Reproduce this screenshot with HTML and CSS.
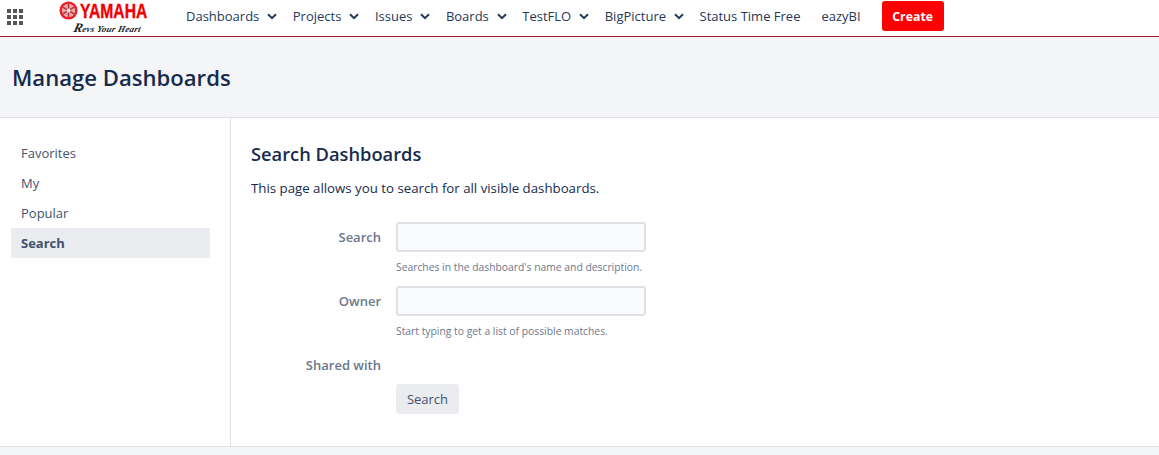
FILE: index.html
```html
<!DOCTYPE html>
<html lang="en">
<head>
<meta charset="utf-8">
<title>Manage Dashboards</title>
<link rel="stylesheet" href="styles.css">
</head>
<body>
<header class="topbar">
  <button class="apps" aria-label="Apps">
    <svg width="16" height="16" viewBox="0 0 16 16"><g fill="#555"><rect x="0" y="0" width="4" height="4"/><rect x="6" y="0" width="4" height="4"/><rect x="12" y="0" width="4" height="4"/><rect x="0" y="6" width="4" height="4"/><rect x="6" y="6" width="4" height="4"/><rect x="12" y="6" width="4" height="4"/><rect x="0" y="12" width="4" height="4"/><rect x="6" y="12" width="4" height="4"/><rect x="12" y="12" width="4" height="4"/></g></svg>
  </button>
  <div class="logo">
    <div class="logo-top">
      <svg class="emblem" width="19" height="19" viewBox="0 0 20 20"><circle cx="10" cy="10" r="9.500" fill="#ee1c25"/><circle cx="10" cy="10" r="7" fill="#e8a9ab"/><g stroke="#b5303a" stroke-width="1.600"><path d="M10 3v14M4 6.500l12 7M16 6.500l-12 7"/></g><circle cx="10" cy="10" r="2" fill="#f7dede"/></svg>
      <span class="logo-name">YAMAHA</span>
    </div>
    <span class="logo-tag">Revs Your Heart</span>
  </div>
  <nav class="nav">
    <a class="nav-item">Dashboards<svg class="chev" viewBox="0 0 10 7"><path d="M1 1.200l4 4 4-4" /></svg></a>
    <a class="nav-item">Projects<svg class="chev" viewBox="0 0 10 7"><path d="M1 1.200l4 4 4-4" /></svg></a>
    <a class="nav-item">Issues<svg class="chev" viewBox="0 0 10 7"><path d="M1 1.200l4 4 4-4" /></svg></a>
    <a class="nav-item">Boards<svg class="chev" viewBox="0 0 10 7"><path d="M1 1.200l4 4 4-4" /></svg></a>
    <a class="nav-item">TestFLO<svg class="chev" viewBox="0 0 10 7"><path d="M1 1.200l4 4 4-4" /></svg></a>
    <a class="nav-item">BigPicture<svg class="chev" viewBox="0 0 10 7"><path d="M1 1.200l4 4 4-4" /></svg></a>
    <a class="nav-item">Status Time Free</a>
    <a class="nav-item">eazyBI</a>
  </nav>
  <button class="create">Create</button>
</header>
<section class="page-head"><h1>Manage Dashboards</h1></section>
<div class="body-wrap">
  <aside class="side">
    <a class="side-item">Favorites</a>
    <a class="side-item">My</a>
    <a class="side-item">Popular</a>
    <a class="side-item active">Search</a>
  </aside>
  <main class="main">
    <h2>Search Dashboards</h2>
    <p class="intro">This page allows you to search for all visible dashboards.</p>
    <form class="form">
      <div class="row">
        <label class="lbl">Search</label>
        <div class="field"><input class="inp" type="text"><div class="hint">Searches in the dashboard's name and description.</div></div>
      </div>
      <div class="row">
        <label class="lbl">Owner</label>
        <div class="field"><input class="inp" type="text"><div class="hint">Start typing to get a list of possible matches.</div></div>
      </div>
      <div class="row shared">
        <label class="lbl">Shared with</label>
      </div>
      <div class="row">
        <span class="lbl"></span>
        <button class="btn" type="button">Search</button>
      </div>
    </form>
  </main>
</div>
<footer class="foot"></footer>
</body>
</html>
```
FILE: styles.css
```css
* { box-sizing: border-box; }
html, body { margin: 0; padding: 0; }
body {
  width: 1159px;
  height: 455px;
  overflow: hidden;
  background: #fff;
  color: #172b4d;
  font-family: "Open Sans", "Noto Sans", sans-serif;
  font-size: 13px;
  display: flex;
  flex-direction: column;
}
.topbar {
  height: 37px;
  flex: none;
  display: flex;
  align-items: center;
  background: #fff;
  border-bottom: 1px solid #a11a1f;
  padding-bottom: 4px;
}
.apps {
  border: 0;
  background: none;
  padding: 0;
  margin: 1px 0 0 7px;
  width: 16px;
  height: 16px;
  display: flex;
}
.logo {
  margin: 0 0 0 36px;
  width: 87px;
  height: 32px;
  display: flex;
  flex-direction: column;
  line-height: 1;
  padding-top: 1px;
}
.logo-top { display: flex; align-items: center; height: 19px; }
.emblem { flex: none; }
.logo-name {
  width: 66px;
  margin-left: 2px;
  font-family: "Liberation Sans", sans-serif;
  font-weight: 700;
  font-size: 21px;
  color: #f00000;
  display: inline-block;
  transform: scaleX(.745);
  transform-origin: left center;
  -webkit-text-stroke: .4px #f00000;
}
.logo-tag {
  display: block;
  font-family: "Liberation Serif", serif;
  font-style: italic;
  font-weight: 700;
  font-size: 9px;
  letter-spacing: .25px;
  white-space: nowrap;
  color: #222;
  margin: 1px 0 0 15px;
  transform: skewX(-14deg);
}
.logo-tag::first-letter { font-size: 13px; }
.nav { display: flex; align-items: center; margin-left: 40px; gap: 21px; }
.nav-item { display: flex; align-items: center; color: #253858; white-space: nowrap; }
.chev { width: 10px; height: 7px; margin: 0 -5.500px 0 8px; fill: none; stroke: #253858; stroke-width: 2; }
.create {
  margin-left: 21px;
  width: 62px;
  height: 30px;
  border: 0;
  border-radius: 3px;
  background: #ff0000;
  color: #fff;
  font: 700 12.300px "Open Sans", sans-serif;
  padding: 0;
}
.page-head {
  height: 81px;
  flex: none;
  background: #f4f5f7;
  border-bottom: 1px solid #dfe1e6;
  display: flex;
  align-items: center;
  padding: 0 0 0 12px;
}
h1 { margin: 0; font-size: 22.100px; font-weight: 600; color: #172b4d; }
.body-wrap { height: 329px; flex: none; display: flex; border-bottom: 1px solid #dfe1e6; }
.side {
  width: 231px;
  flex: none;
  border-right: 1px solid #dfe1e6;
  padding: 20px 20px 0 11px;
}
.side-item { display: block; height: 30px; line-height: 30px; padding-left: 10px; color: #42526e; }
.side-item.active { background: #ebecf0; font-weight: 700; }
.main { padding: 24px 0 0 20px; flex: 1; }
h2 { margin: 0; font-size: 18.300px; line-height: 24px; font-weight: 600; color: #172b4d; }
.intro { margin: 12px 0 0; font-size: 13.250px; line-height: 20px; color: #172b4d; }
.form { margin-top: 24px; }
.row { display: flex; }
.lbl { width: 130px; text-align: right; font-weight: 600; color: #6b778c; line-height: 30px; margin-right: 15px; flex: none; }
.field { width: 250px; }
.inp { display: block; width: 250px; height: 30px; border: 2px solid #dfe1e6; border-radius: 3px; background: #fafbfc; margin: 0; }
.hint { font-size: 10.330px; line-height: 14px; color: #6b778c; margin-top: 8px; height: 26px; white-space: nowrap; }
.shared { height: 34px; }
.btn { width: 63px; height: 30px; border: 0; border-radius: 3px; background: #ebecf0; color: #42526e; font: 13px "Open Sans", sans-serif; padding: 0; }
.foot { flex: 1; background: #f4f5f7; }
```
